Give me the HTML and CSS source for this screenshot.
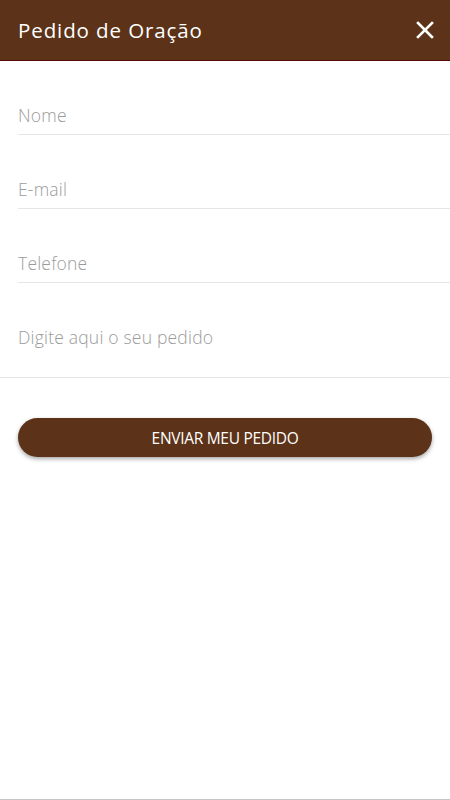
FILE: index.html
```html
<!DOCTYPE html>
<html lang="pt-BR">

<head>
    <meta charset="UTF-8">
    <meta name="viewport" content="width=device-width, initial-scale=1">
    <title>Pedido de Oração</title>
    <link rel="stylesheet" href="styles.css">
</head>

<body>
    <div class="screen">

        <header class="appbar">
            <h1 class="appbar-title">Pedido de Oração</h1>
            <button class="appbar-close" type="button" aria-label="Fechar">
                <svg width="18" height="18" viewBox="0 0 18 18">
                    <path d="M2 2 L16 16 M16 2 L2 16" stroke="#ffffff" stroke-width="2.6" stroke-linecap="square" fill="none" />
                </svg>
            </button>
        </header>

        <form class="prayer-form">
            <div class="field">
                <input type="text" placeholder="Nome">
            </div>
            <div class="field">
                <input type="email" placeholder="E-mail">
            </div>
            <div class="field">
                <input type="tel" placeholder="Telefone">
            </div>
            <div class="field field-full">
                <textarea placeholder="Digite aqui o seu pedido"></textarea>
            </div>

            <button class="submit" type="button">Enviar meu pedido</button>
        </form>

        <div class="bottom-edge"></div>
    </div>
</body>

</html>
```

FILE: styles.css
```css
/* Cores do app */
:root {
    --brown: #5c3319;
    --brown-edge: #5a0a06;
    --line: #e6e6e6;
    --placeholder: #9b9b9b;
}

* {
    margin: 0;
    padding: 0;
    box-sizing: border-box;
}

body {
    font-family: "Open Sans", "Noto Sans", sans-serif;
    background-color: #ffffff;
}

.screen {
    display: flex;
    flex-direction: column;
    min-height: 100vh;
}

/* Barra superior */
.appbar {
    height: 61px;
    padding: 0 15px 0 18px;
    display: flex;
    align-items: center;
    justify-content: space-between;
    background-color: var(--brown);
    border-bottom: 1px solid var(--brown-edge);
}

.appbar-title {
    font-size: 20.5px;
    font-weight: 400;
    color: #ffffff;
    letter-spacing: 0.9px;
}

.appbar-close {
    width: 20px;
    height: 20px;
    border: none;
    background: none;
    display: flex;
    align-items: center;
    justify-content: center;
    cursor: pointer;
}

/* Formulário */
.field {
    margin-left: 18px;
    border-bottom: 1px solid var(--line);
}

.field input,
.field textarea {
    display: block;
    width: 100%;
    border: none;
    outline: none;
    background: none;
    font-family: inherit;
    font-size: 17.5px;
    font-weight: 300;
    line-height: 20px;
    letter-spacing: 0.2px;
    color: #333333;
}

.field input {
    height: 73px;
    padding: 44px 0 9px;
}

.field input::placeholder,
.field textarea::placeholder {
    color: var(--placeholder);
}

.field-full {
    margin-left: 0;
    padding-left: 18px;
}

.field textarea {
    height: 94px;
    padding-top: 44px;
    resize: none;
}

.submit {
    display: block;
    margin: 40px 18px 0;
    width: calc(100% - 36px);
    height: 39px;
    border: none;
    border-radius: 20px;
    background-color: var(--brown);
    color: #ffffff;
    font-family: inherit;
    font-size: 15.5px;
    text-transform: uppercase;
    letter-spacing: -0.3px;
    box-shadow: 0 2px 4px rgba(0, 0, 0, 0.35);
    cursor: pointer;
}

.bottom-edge {
    margin-top: auto;
    height: 1px;
    background-color: #c4c4c4;
}
```
